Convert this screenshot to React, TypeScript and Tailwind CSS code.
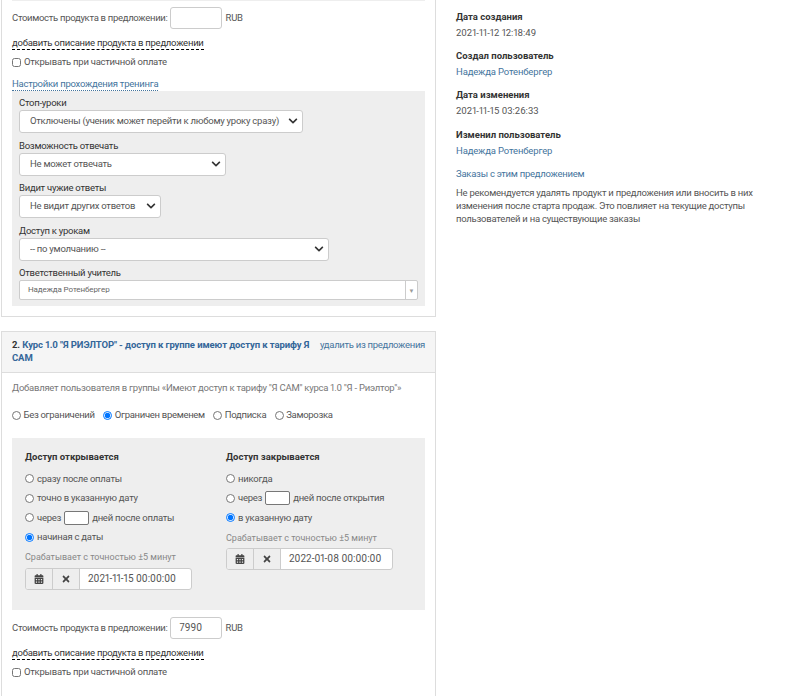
import { FaCalendarAlt, FaChevronDown, FaTimes } from "react-icons/fa";

const link = "text-[#44749d]";

function Picker({ label, value, width }: { label: string; value: string; width: string }) {
  return (
    <div className="flex flex-col">
      <label className="h-[14px] leading-[14px] text-[#333]">{label}</label>
      <div className={`relative h-[23px] ${width}`}>
        <select
          defaultValue={value}
          className="h-full w-full appearance-none rounded-[3px] border border-[#ccc] bg-white pl-[10px] pr-[20px] text-[#555]"
        >
          <option>{value}</option>
        </select>
        <FaChevronDown className="pointer-events-none absolute right-[5px] top-[6px] text-[10px] text-[#333]" />
      </div>
    </div>
  );
}

function Choice({ text, checked, days }: { text: string; checked?: boolean; days?: string }) {
  return (
    <div className="flex h-[19.5px] items-center text-[#555]">
      <input type="radio" readOnly checked={!!checked} className="m-0 mr-[3px] h-[9px] w-[9px]" />
      {days ? (
        <>
          <span>{text}</span>
          <span className="mx-[3px] h-[14px] w-[25px] rounded-[2px] border border-[#777] bg-white" />
          <span>{days}</span>
        </>
      ) : (
        <span>{text}</span>
      )}
    </div>
  );
}

function DateField({ value }: { value: string }) {
  return (
    <div className="flex h-[22px] w-[167px] overflow-hidden rounded-[3px] border border-[#ccc] bg-white">
      <span className="flex w-[27px] items-center justify-center border-r border-[#ccc] bg-[#eee] text-[10px] text-[#444]">
        <FaCalendarAlt />
      </span>
      <span className="flex w-[27px] items-center justify-center border-r border-[#ccc] bg-[#eee] text-[10px] text-[#444]">
        <FaTimes />
      </span>
      <span className="whitespace-nowrap pl-[8px] text-[10px] leading-[20px] tracking-normal text-[#555]">{value}</span>
    </div>
  );
}

function PriceBlock({ price }: { price?: string }) {
  return (
    <>
      <div className="flex h-[22px] items-center text-[#555]">
        <span className="tracking-[-0.3px]">Стоимость продукта в предложении:</span>
        <span className="ml-[2px] h-[22px] w-[52px] rounded-[3px] border border-[#ccc] bg-white pl-[9px] text-[10px] leading-[20px] tracking-normal">
          {price}
        </span>
        <span className="ml-[4px]">RUB</span>
      </div>
      <div className="mt-[7px] h-[14px] w-fit border-b border-dashed border-black leading-[13px] text-[#333]">
        добавить описание продукта в предложении
      </div>
      <label className="mt-[3px] flex h-[19px] items-center text-[#555]">
        <input type="checkbox" className="m-0 mr-[3px] h-[9px] w-[9px]" />
        Открывать при частичной оплате
      </label>
    </>
  );
}

export default function App() {
  return (
    <div className="flex h-[696px] w-[804px] overflow-hidden bg-white font-['Roboto',sans-serif] text-[9.5px] tracking-[-0.25px] proportional-nums">
      <div className="ml-px w-[435px] shrink-0">
        <section className="h-[317px] border border-t-0 border-[#ddd] px-[10px]">
          <div className="h-px bg-[#eee]" />
          <div className="pt-[6px]">
            <PriceBlock />
          </div>
          <div className={`mt-[5px] h-[14px] w-fit border-b border-dotted border-[#44749d] leading-[13px] ${link}`}>
            Настройки прохождения тренинга
          </div>
          <div className="flex h-[215px] flex-col gap-[5.5px] bg-[#eee] px-[7px] pt-[5px]">
            <Picker label="Стоп-уроки" value="Отключены (ученик может перейти к любому уроку сразу)" width="w-[284px]" />
            <Picker label="Возможность отвечать" value="Не может отвечать" width="w-[207px]" />
            <Picker label="Видит чужие ответы" value="Не видит других ответов" width="w-[142px]" />
            <Picker label="Доступ к урокам" value="-- по умолчанию --" width="w-[310px]" />
            <div className="flex flex-col">
              <label className="h-[14px] leading-[14px] text-[#333]">Ответственный учитель</label>
              <div className="flex h-[20px] w-[399px] items-center justify-between rounded-[2px] border border-[#ccc] bg-white pl-[8px] text-[8px] tracking-[-0.1px] text-[#666]">
                Надежда Ротенбергер
                <span className="flex h-full w-[12px] items-center justify-center border-l border-[#ccc] text-[6px] text-[#999]">▼</span>
              </div>
            </div>
          </div>
        </section>

        <section className="mt-[14px] h-[366px] border border-[#ddd]">
          <div className="flex h-[41px] justify-between border-b border-[#ddd] bg-[#f5f5f5] px-[10px] pt-[6px] font-bold leading-[13px] tracking-[-0.1px]">
            <div className="w-[300px] text-[#336699]">
              <span className="text-[#333]">2. </span>
              Курс 1.0 "Я РИЭЛТОР" - доступ к группе имеют доступ к тарифу Я САМ
            </div>
            <span className={`whitespace-nowrap font-normal tracking-[-0.3px] ${link}`}>удалить из предложения</span>
          </div>
          <div className="px-[10px]">
            <p className="mt-[8px] h-[14px] whitespace-nowrap leading-[14px] text-[#777]">
              Добавляет пользователя в группы «Имеют доступ к тарифу "Я САМ" курса 1.0 "Я - Риэлтор"»
            </p>
            <div className="mt-[13px] flex h-[14px] items-center gap-[8.5px] tracking-[-0.3px] text-[#555]">
              {["Без ограничений", "Ограничен временем", "Подписка", "Заморозка"].map((t) => (
                <label key={t} className="flex items-center">
                  <input type="radio" readOnly checked={t === "Ограничен временем"} className="m-0 mr-[2.5px] h-[9px] w-[9px]" />
                  {t}
                </label>
              ))}
            </div>
            <div className="mt-[16px] grid h-[172px] grid-cols-[201px_1fr] bg-[#eee] pl-[13px] pt-[12px]">
              <div>
                <h4 className="mb-[5px] h-[14px] font-bold leading-[14px] tracking-normal text-[#333]">Доступ открывается</h4>
                <Choice text="сразу после оплаты" />
                <Choice text="точно в указанную дату" />
                <Choice text="через" days="дней после оплаты" />
                <Choice text="начиная с даты" checked />
                <p className="mb-[6px] mt-[5px] text-[9px] leading-[10px] tracking-normal text-[#888]">Срабатывает с точностью ±5 минут</p>
                <DateField value="2021-11-15 00:00:00" />
              </div>
              <div>
                <h4 className="mb-[5px] h-[14px] font-bold leading-[14px] tracking-normal text-[#333]">Доступ закрывается</h4>
                <Choice text="никогда" />
                <Choice text="через" days="дней после открытия" />
                <Choice text="в указанную дату" checked />
                <p className="mb-[5px] mt-[5.5px] text-[9px] leading-[10px] tracking-normal text-[#888]">Срабатывает с точностью ±5 минут</p>
                <DateField value="2022-01-08 00:00:00" />
              </div>
            </div>
            <div className="pt-[7px]">
              <PriceBlock price="7990" />
            </div>
          </div>
        </section>
      </div>

      <aside className="ml-[20px] w-[320px] pt-[10px] leading-[13px] text-[#555]">
        <h5 className="font-bold tracking-normal text-[#333]">Дата создания</h5>
        <p className="mt-[3px] tracking-normal">2021-11-12 12:18:49</p>
        <h5 className="mt-[10px] font-bold tracking-normal text-[#333]">Создал пользователь</h5>
        <p className={`mt-[3px] tracking-[-0.15px] ${link}`}>Надежда Ротенбергер</p>
        <h5 className="mt-[10px] font-bold tracking-normal text-[#333]">Дата изменения</h5>
        <p className="mt-[3px] tracking-normal">2021-11-15 03:26:33</p>
        <h5 className="mt-[11px] font-bold tracking-normal text-[#333]">Изменил пользователь</h5>
        <p className={`mt-[3px] tracking-[-0.15px] ${link}`}>Надежда Ротенбергер</p>
        <p className={`mt-[10px] ${link}`}>Заказы с этим предложением</p>
        <p className="mt-[6px] w-[310px]">
          Не рекомендуется удалять продукт и предложения или вносить в них изменения после старта продаж. Это повлияет на текущие доступы пользователей и на существующие заказы
        </p>
      </aside>
    </div>
  );
}
